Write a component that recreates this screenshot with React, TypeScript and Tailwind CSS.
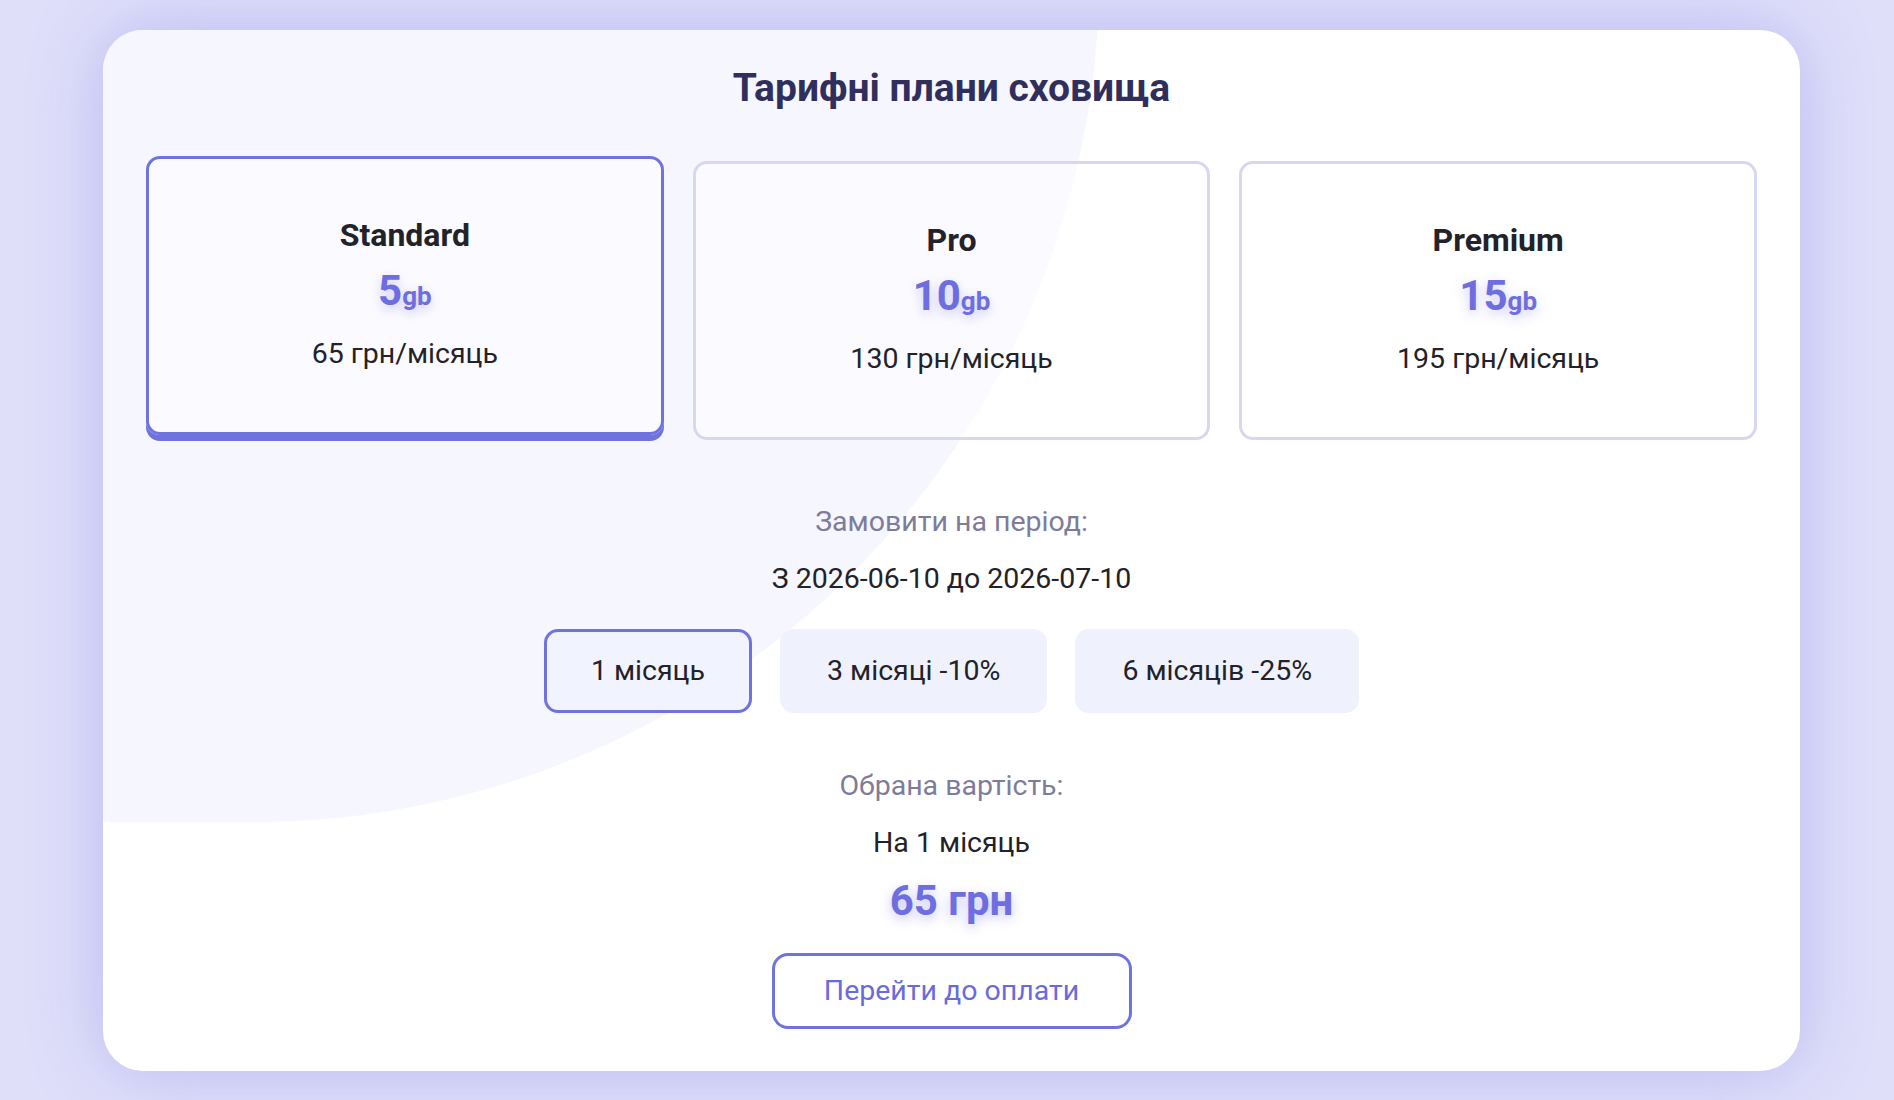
import React, { useState } from 'react';

interface Plan {
  name: string;
  size: number;
  price: number;
}

interface Period {
  months: number;
  label: string;
  discount: number;
}

const plans: Plan[] = [
  { name: 'Standard', size: 5, price: 65 },
  { name: 'Pro', size: 10, price: 130 },
  { name: 'Premium', size: 15, price: 195 },
];

const periods: Period[] = [
  { months: 1, label: '1 місяць', discount: 0 },
  { months: 3, label: '3 місяці -10%', discount: 10 },
  { months: 6, label: '6 місяців -25%', discount: 25 },
];

const startDate = '2026-06-10';

const addMonths = (date: string, months: number) => {
  const [y, m, d] = date.split('-').map(Number);
  const total = m - 1 + months;
  const year = y + Math.floor(total / 12);
  const month = (total % 12) + 1;
  return `${year}-${String(month).padStart(2, '0')}-${String(d).padStart(2, '0')}`;
};

const monthsLabel = (months: number) => {
  if (months === 1) return '1 місяць';
  if (months < 5) return `${months} місяці`;
  return `${months} місяців`;
};

const PlanCard: React.FC<{ plan: Plan; active: boolean; onClick: () => void }> = ({ plan, active, onClick }) => (
  <button
    type="button"
    onClick={onClick}
    className={
      active
        ? 'flex-1 h-[279px] -translate-y-[5px] rounded-[14px] border-[3px] border-[#7073de] bg-white/60 pt-[58px] flex flex-col items-center shadow-[0_6px_0_#7073de]'
        : 'flex-1 h-[279px] rounded-[14px] border-[3px] border-[#d7d7f0] bg-white/60 pt-[58px] flex flex-col items-center'
    }
  >
    <div className="text-[32px] leading-[36px] font-bold text-[#222228]">{plan.name}</div>
    <div className="mt-[14px] leading-[48px] font-bold text-[#6e6ee0] [text-shadow:0_4px_12px_rgba(110,110,224,0.35)]">
      <span className="text-[42px]">{plan.size}</span>
      <span className="text-[26px]">gb</span>
    </div>
    <div className="mt-[13px] text-[28.5px] leading-[34px] text-[#222228]">{plan.price} грн/місяць</div>
  </button>
);

const App: React.FC = () => {
  const [planIdx, setPlanIdx] = useState(0);
  const [periodIdx, setPeriodIdx] = useState(0);

  const plan = plans[planIdx];
  const period = periods[periodIdx];
  const total = Math.round(plan.price * period.months * (1 - period.discount / 100));

  return (
    <div className="min-h-screen bg-[#dfdffa] pt-[30px] pb-[29px] font-['Roboto','Noto_Sans',sans-serif]">
      <div className="relative ml-[103px] w-[1697px] h-[1041px] overflow-hidden rounded-[40px] bg-white shadow-[0_0_70px_rgba(140,140,230,0.45)]">
        <div className="absolute left-[-864px] top-[-900px] w-[1860px] h-[1692px] rounded-full bg-[#f5f6fe]" />

        <div className="relative flex flex-col items-center pt-[36px]">
          <h1 className="text-[39px] leading-[44px] font-bold text-[#302f5c]">Тарифні плани сховища</h1>

          <div className="mt-[51px] w-full px-[43px] flex gap-[29px]">
            {plans.map((p, i) => (
              <PlanCard key={p.name} plan={p} active={i === planIdx} onClick={() => setPlanIdx(i)} />
            ))}
          </div>

          <div className="mt-[65px] text-[28.5px] leading-[34px] text-[#7e7c99]">Замовити на період:</div>
          <div className="mt-[23px] text-[28.5px] leading-[34px] text-[#222228]">
            З {startDate} до {addMonths(startDate, period.months)}
          </div>

          <div className="mt-[33px] flex gap-[28px]">
            {periods.map((p, i) => (
              <button
                key={p.months}
                type="button"
                onClick={() => setPeriodIdx(i)}
                className={
                  i === periodIdx
                    ? 'h-[84px] px-[44px] rounded-[14px] border-[3px] border-[#7073de] bg-[#f1f3fe] text-[28.5px] text-[#222228]'
                    : 'h-[84px] px-[44px] rounded-[14px] border-[3px] border-transparent bg-[#eff2fd] text-[28.5px] text-[#222228]'
                }
              >
                {p.label}
              </button>
            ))}
          </div>

          <div className="mt-[56px] text-[28.5px] leading-[34px] text-[#7e7c99]">Обрана вартість:</div>
          <div className="mt-[23px] text-[28.5px] leading-[34px] text-[#222228]">На {monthsLabel(period.months)}</div>
          <div className="mt-[16px] text-[42px] leading-[50px] font-bold text-[#6e6ee0] [text-shadow:0_4px_12px_rgba(110,110,224,0.4)]">
            {total} грн
          </div>

          <button
            type="button"
            className="mt-[27px] w-[360px] h-[76px] rounded-[16px] border-[3px] border-[#7073de] bg-white text-[28.5px] text-[#6a6adf]"
          >
            Перейти до оплати
          </button>
        </div>
      </div>
    </div>
  );
};

export default App;
